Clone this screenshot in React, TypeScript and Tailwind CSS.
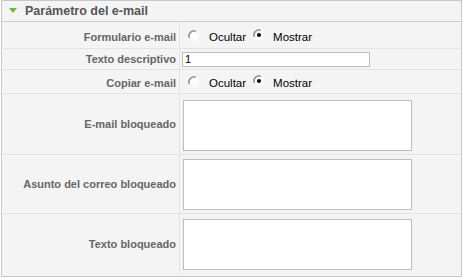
import React from "react";

function Radio({ checked }: { checked?: boolean }) {
  return (
    <svg width="12" height="12" viewBox="0 0 12 12" className="shrink-0">
      <circle cx="6" cy="6" r="5.5" fill="#fdfdfd" />
      <path d="M1.2 7.5 A5 5 0 0 1 7.5 1.2" stroke="#6b6b6b" strokeWidth="1.4" fill="none" />
      <path d="M2.2 8.6 A4.4 4.4 0 0 1 8.6 2.2" stroke="#b5b5b5" strokeWidth="0.8" fill="none" />
      {checked && <circle cx="6" cy="6" r="2.1" fill="#111" />}
    </svg>
  );
}

function RadioPair() {
  return (
    <div className="flex items-center text-[11.5px] text-black">
      <span className="ml-[6px] mt-[-4px]"><Radio /></span>
      <span className="ml-[9px]">Ocultar</span>
      <span className="ml-[7px] mt-[-5px]"><Radio checked /></span>
      <span className="ml-[8px]">Mostrar</span>
    </div>
  );
}

function Row({ label, h, children, last, pt }: { label: string; h: string; children: React.ReactNode; last?: boolean; pt?: string }) {
  return (
    <div className={`flex ${h} ${last ? "" : "border-b border-[#e4e4e4]"}`}>
      <div className={`w-[177px] shrink-0 flex items-center justify-end pr-[3px] border-r border-[#e4e4e4] text-[11px] font-bold text-[#666] ${pt ?? ""}`}>
        {label}
      </div>
      <div className={`flex items-center pl-[2px] ${pt ?? ""}`}>{children}</div>
    </div>
  );
}

export default function App() {
  return (
    <div className="w-[466px] h-[280px] bg-white" style={{ fontFamily: '"Liberation Sans", Arial, sans-serif' }}>
      <div className="ml-[1px] w-[461px] h-[277px] border border-[#c8c8c8] bg-[#f4f4f4] flex flex-col">
        <div className="h-[21px] flex items-center border-b border-[#cccccc] shrink-0">
          <svg width="8" height="6" viewBox="0 0 8 6" className="ml-[7px]">
            <path d="M0 0 H8 L4 5 Z" fill="#74b04a" />
          </svg>
          <span className="ml-[8px] text-[12.5px] font-bold text-[#555]">Parámetro del e-mail</span>
        </div>
        <div className="flex flex-col pl-[1px]">
          <Row label="Formulario e-mail" h="h-[27px]" pt="pt-[5px]">
            <RadioPair />
          </Row>
          <Row label="Texto descriptivo" h="h-[21px]">
            <input
              readOnly
              value="1"
              className="w-[188px] h-[15px] bg-white border border-[#bdbdbd] text-[11px] text-black pl-[2px] outline-none"
            />
          </Row>
          <Row label="Copiar e-mail" h="h-[24px]" pt="pt-[4px]">
            <RadioPair />
          </Row>
          <Row label="E-mail bloqueado" h="h-[61px]">
            <textarea readOnly className="w-[229px] h-[51px] bg-white border border-[#bdbdbd] resize-none ml-[1px] mt-[2px]" />
          </Row>
          <Row label="Asunto del correo bloqueado" h="h-[59px]">
            <textarea readOnly className="w-[229px] h-[51px] bg-white border border-[#bdbdbd] resize-none ml-[1px]" />
          </Row>
          <Row label="Texto bloqueado" h="h-[60px]" last>
            <textarea readOnly className="w-[229px] h-[51px] bg-white border border-[#bdbdbd] resize-none ml-[1px]" />
          </Row>
        </div>
      </div>
    </div>
  );
}
